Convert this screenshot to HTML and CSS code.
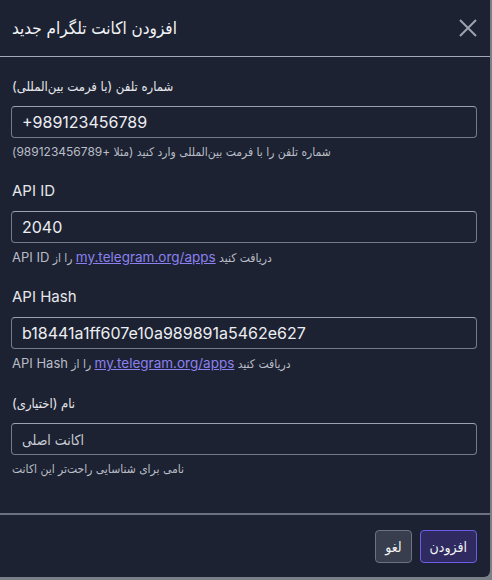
FILE: index.html
```html
<!DOCTYPE html>
<html>
<head>
<meta charset="utf-8">
<link rel="stylesheet" href="styles.css">
</head>
<body>
<div class="modal">
  <div class="header">
    <h2 class="title">افزودن اکانت تلگرام جدید</h2>
    <button class="close" aria-label="close">
      <svg width="18" height="18" viewBox="0 0 18 18"><path d="M1 1 L17 17 M17 1 L1 17" stroke="#9ca3af" stroke-width="2" fill="none"/></svg>
    </button>
  </div>
  <div class="body">
    <div class="field">
      <label class="label label-fa">شماره تلفن (با فرمت بین‌المللی)</label>
      <div class="input">+989123456789</div>
      <div class="help">شماره تلفن را با فرمت بین‌المللی وارد کنید (مثلا +989123456789)</div>
    </div>
    <div class="field">
      <label class="label">API ID</label>
      <div class="input">2040</div>
      <div class="help"><span class="lat">API ID</span> را از <a href="#">my.telegram.org/apps</a> دریافت کنید</div>
    </div>
    <div class="field">
      <label class="label">API Hash</label>
      <div class="input">b18441a1ff607e10a989891a5462e627</div>
      <div class="help"><span class="lat">API Hash</span> را از <a href="#">my.telegram.org/apps</a> دریافت کنید</div>
    </div>
    <div class="field">
      <label class="label label-fa">نام (اختیاری)</label>
      <div class="input input-fa">اکانت اصلی</div>
      <div class="help">نامی برای شناسایی راحت‌تر این اکانت</div>
    </div>
  </div>
  <div class="footer">
    <button class="btn btn-cancel">لغو</button>
    <button class="btn btn-primary">افزودن</button>
  </div>
</div>
</body>
</html>
```

FILE: styles.css
```css
html, body {
  margin: 0;
  padding: 0;
}
body {
  background: #7b7f88;
  width: 492px;
  height: 580px;
  font-family: "Inter", "DejaVu Sans Condensed", "DejaVu Sans", sans-serif;
  color: #e5e7eb;
}
.modal {
  width: 490px;
  height: 577px;
  background: #1d2232;
  border-bottom-right-radius: 6px;
  display: flex;
  flex-direction: column;
}
.header {
  height: 57px;
  box-sizing: border-box;
  border-bottom: 1px solid #a3a9b6;
  display: flex;
  align-items: center;
  justify-content: space-between;
  padding: 0 13px 0 12px;
}
.title {
  margin: 0;
  font-size: 17px;
  font-weight: normal;
  color: #f3f4f6;
}
.close {
  background: none;
  border: 0;
  padding: 0;
  width: 18px;
  height: 18px;
  display: flex;
}
.body {
  padding: 19px 13px 36px 11px;
  display: flex;
  flex-direction: column;
  gap: 21px;
}
.field {
  display: flex;
  flex-direction: column;
}
.label {
  font-size: 15px;
  line-height: 20px;
  padding-left: 1px;
  margin-bottom: 10px;
  color: #e5e7eb;
}
.label-fa {
  font-size: 13px;
}
.input {
  height: 32px;
  box-sizing: border-box;
  border: 1px solid #737b8c;
  border-top-color: #9aa2b3;
  border-radius: 4px;
  padding: 0 10px;
  display: flex;
  align-items: center;
  font-size: 16px;
  color: #eceef2;
}
.input-fa {
  font-size: 14px;
  color: #c9cdd4;
}
.help {
  margin-top: 6px;
  font-size: 12px;
  line-height: 16px;
  color: #b9bdc6;
  padding-left: 1px;
}
.help .lat {
  font-size: 13px;
}
.help a {
  color: #8b80f0;
  text-decoration: underline;
  font-size: 13.5px;
}
.footer {
  flex: 1;
  border-top: 2px solid #6b7180;
  display: flex;
  justify-content: flex-end;
  align-items: flex-start;
  gap: 8px;
  padding: 15px 13px 0 0;
}
.btn {
  height: 33px;
  border-radius: 4px;
  font-family: "Inter", "DejaVu Sans Condensed", "DejaVu Sans", sans-serif;
  font-size: 14px;
  color: #f3f4f6;
  padding: 0 9px;
  cursor: pointer;
}
.btn-cancel {
  background: #383e4d;
  border: 1px solid #6b7280;
}
.btn-primary {
  background: #2f2b60;
  border: 1px solid #6d5ce8;
}
```
